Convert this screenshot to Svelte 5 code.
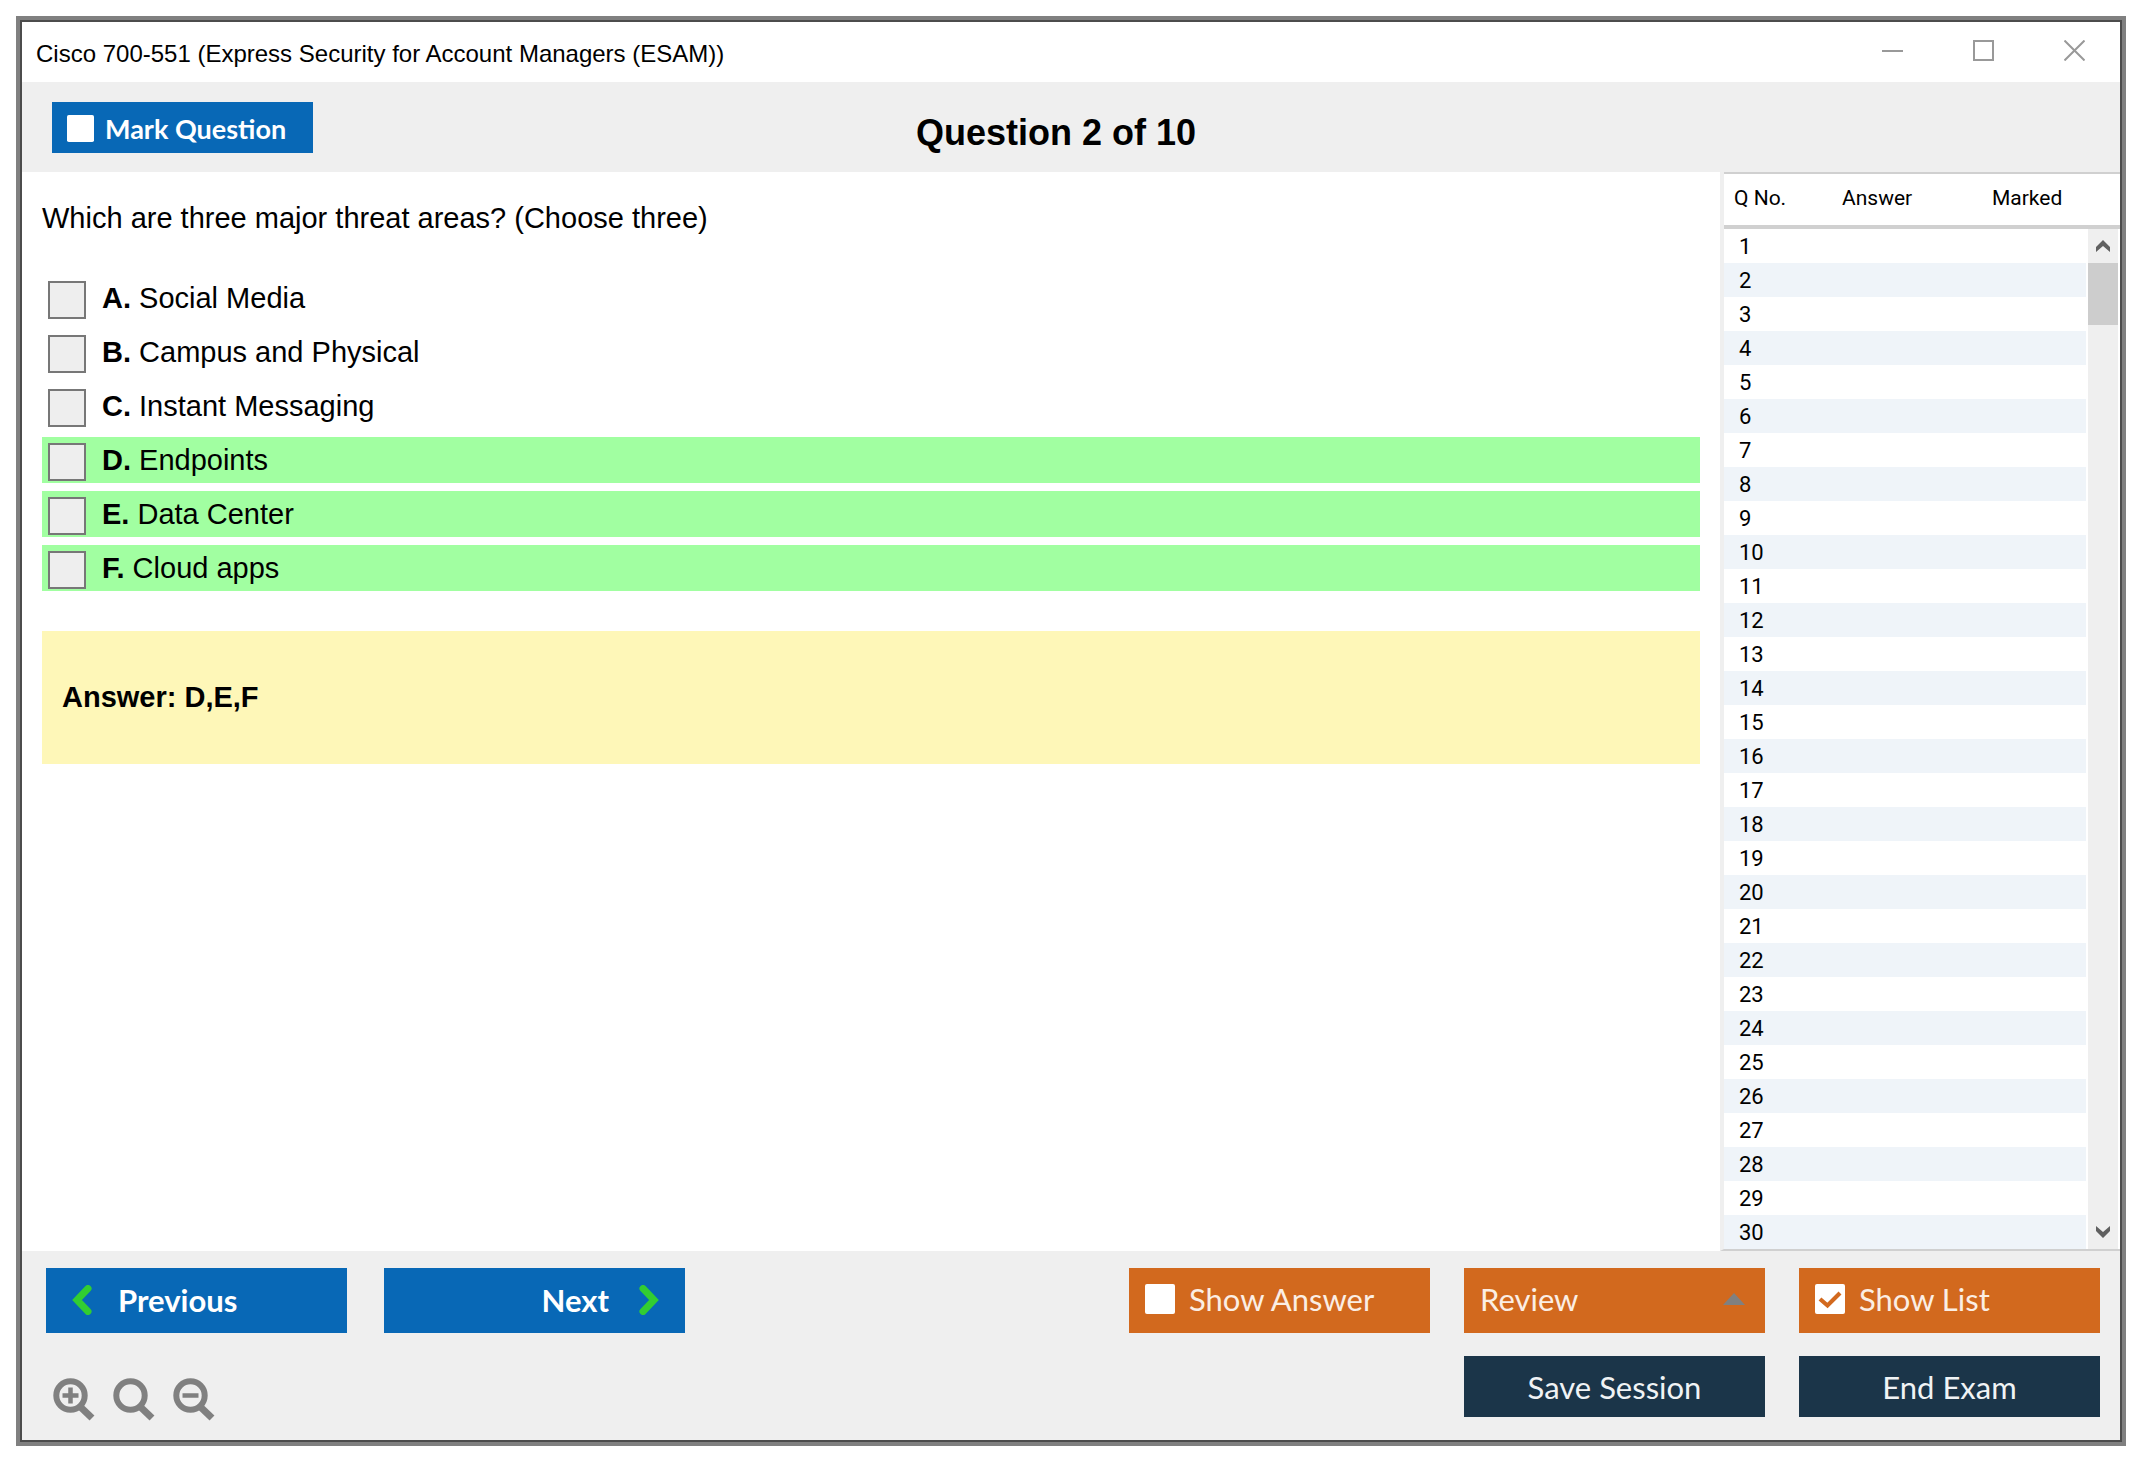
<script lang="ts">
  type Option = { letter: string; text: string; correct: boolean; checked: boolean };

  const title = "Cisco 700-551 (Express Security for Account Managers (ESAM))";
  const visibleRows = 30;

  let options: Option[] = $state([
    { letter: "A", text: "Social Media", correct: false, checked: false },
    { letter: "B", text: "Campus and Physical", correct: false, checked: false },
    { letter: "C", text: "Instant Messaging", correct: false, checked: false },
    { letter: "D", text: "Endpoints", correct: true, checked: false },
    { letter: "E", text: "Data Center", correct: true, checked: false },
    { letter: "F", text: "Cloud apps", correct: true, checked: false }
  ]);

  let marked = $state(false);
  let showAnswer = $state(false);
  let showList = $state(true);
  let review = $state("review");

  const rows = Array.from({ length: visibleRows }, (_, i) => i + 1);
  const answer = $derived(options.filter((o) => o.correct).map((o) => o.letter).join(","));
</script>

{#snippet tick(on: boolean)}
  <svg class="tick" viewBox="0 0 30 30" aria-hidden="true">
    <rect width="30" height="30" rx="2" fill="#fff" />
    {#if on}
      <path d="M5 15l7.500 6.500L25 9" fill="none" stroke="#d2691e" stroke-width="4.200" />
    {/if}
  </svg>
{/snippet}

{#snippet lens(sign: string)}
  <svg width="42" height="44" viewBox="0 0 42 44" fill="none" stroke="#808080" aria-hidden="true">
    <circle cx="17.500" cy="17.500" r="14.200" stroke-width="6" />
    <path d="M28 29.500L39 40" stroke-width="7" />
    {#if sign}
      <path d={sign} stroke-width="4.500" />
    {/if}
  </svg>
{/snippet}

<div class="window">
  <div class="titlebar">
    <span class="title">{title}</span>
    <div class="controls">
      <button type="button" aria-label="Minimize">
        <svg width="21" height="21" viewBox="0 0 21 21"><path d="M0 11h21" /></svg>
      </button>
      <button type="button" aria-label="Maximize">
        <svg width="21" height="21" viewBox="0 0 21 21"><path d="M1 1h19v19H1z" /></svg>
      </button>
      <button type="button" aria-label="Close">
        <svg width="21" height="21" viewBox="0 0 21 21"><path d="M.5 .5l20 20M20.500 .5l-20 20" /></svg>
      </button>
    </div>
  </div>

  <header>
    <label class="toggle mark">
      <input type="checkbox" bind:checked={marked} />
      {@render tick(marked)}
      Mark Question
    </label>
    <h1>Question 2 of 10</h1>
  </header>

  <div class="body">
    <main>
      <p class="question">Which are three major threat areas? (Choose three)</p>

      <div class="options">
        {#each options as option}
          <label class="option" class:correct={option.correct}>
            <input type="checkbox" bind:checked={option.checked} />
            <span><b>{option.letter}.</b> {option.text}</span>
          </label>
        {/each}
      </div>

      <div class="answer">Answer: {answer}</div>
    </main>

    {#if showList}
      <aside>
        <table>
          <thead>
            <tr>
              <th class="no">Q No.</th>
              <th class="given">Answer</th>
              <th>Marked</th>
            </tr>
          </thead>
          <tbody>
            {#each rows as row}
              <tr>
                <td>{row}</td>
                <td></td>
                <td></td>
              </tr>
            {/each}
          </tbody>
        </table>

        <div class="scrollbar">
          <button type="button" aria-label="Scroll up">
            <svg width="14" height="12" viewBox="0 0 14 12"><path d="M0 7L7 0l7 7v5L7 6l-7 6z" /></svg>
          </button>
          <div class="thumb"></div>
          <button type="button" class="down" aria-label="Scroll down">
            <svg width="14" height="12" viewBox="0 0 14 12"><path d="M0 5l7 7 7-7V0L7 6 0 0z" /></svg>
          </button>
        </div>
      </aside>
    {/if}
  </div>

  <footer>
    <div class="left">
      <div class="nav">
        <button type="button" class="btn blue">
          <svg width="20" height="30" viewBox="0 0 20 30"><path d="M16 3.500L5 15l11 11.500" /></svg>
          Previous
        </button>
        <button type="button" class="btn blue next">
          Next
          <svg width="20" height="30" viewBox="0 0 20 30"><path d="M4 3.500L15 15 4 26.500" /></svg>
        </button>
      </div>
      <div class="zoom">
        <button type="button" aria-label="Zoom in">{@render lens("M9.500 17.500h16M17.500 9.500v16")}</button>
        <button type="button" aria-label="Reset zoom">{@render lens("")}</button>
        <button type="button" aria-label="Zoom out">{@render lens("M9.500 17.500h16")}</button>
      </div>
    </div>

    <div class="actions">
      <label class="toggle btn orange">
        <input type="checkbox" bind:checked={showAnswer} />
        {@render tick(showAnswer)}
        Show Answer
      </label>
      <div class="review">
        <select class="btn orange" aria-label="Review" bind:value={review}>
          <option value="review">Review</option>
        </select>
        <svg width="22" height="12" viewBox="0 0 22 12" aria-hidden="true"><path d="M11 0l11 12H0z" /></svg>
      </div>
      <label class="toggle btn orange">
        <input type="checkbox" bind:checked={showList} />
        {@render tick(showList)}
        Show List
      </label>
      <button type="button" class="btn navy save">Save Session</button>
      <button type="button" class="btn navy">End Exam</button>
    </div>
  </footer>
</div>

<style>
:global(body) {
  padding: 16px 24px 24px 16px;
  background: #fff;
  color: #000;
  font-family: "Liberation Sans", Arial, sans-serif;
}

.window,
.window * {
  box-sizing: border-box;
}

.window {
  border: 4px solid #808080;
  outline: 2px solid #4c4c4c;
  outline-offset: -6px;
  padding: 2px;
  background: #fff;
}

button,
select {
  border: 0;
  padding: 0;
  background: none;
  font: inherit;
  color: inherit;
  cursor: pointer;
}

svg {
  flex: none;
}

.titlebar {
  display: flex;
  align-items: center;
  justify-content: space-between;
  height: 60px;
  padding-left: 14px;
}

.title {
  padding-top: 4px;
  font-size: 24px;
  line-height: 28px;
}

.controls {
  display: flex;
  align-self: stretch;
}

.controls button {
  display: flex;
  align-items: center;
  justify-content: center;
  width: 91px;
  height: 56px;
}

.controls svg {
  fill: none;
  stroke: #999;
  stroke-width: 2;
}

header {
  display: grid;
  grid-template-columns: 1fr auto 1fr;
  align-items: center;
  height: 90px;
  padding: 0 60px 0 30px;
  background: #efefef;
}

h1 {
  margin: 0;
  padding-top: 12px;
  font-size: 36px;
  line-height: 40px;
}

.toggle {
  position: relative;
  display: flex;
  align-items: center;
  cursor: pointer;
}

.toggle input {
  position: absolute;
  inset: 0;
  width: 100%;
  height: 100%;
  margin: 0;
  opacity: 0;
}

.tick {
  width: 30px;
  height: 30px;
}

.mark {
  justify-self: start;
  gap: 11px;
  width: 261px;
  height: 51px;
  padding: 2px 0 0 15px;
  background: #0868b6;
  color: #fff;
  font-family: Lato, sans-serif;
  font-size: 27px;
  font-weight: 700;
}

.mark .tick {
  width: 27px;
  height: 27px;
}

.body {
  display: flex;
}

main {
  flex: 1;
  padding: 28px 20px 0;
  font-size: 29px;
}

.question {
  margin: 0;
  line-height: 36px;
}

.options {
  display: grid;
  gap: 8px;
  margin-top: 39px;
}

.option {
  display: flex;
  align-items: center;
  gap: 16px;
  height: 46px;
  padding-left: 6px;
  line-height: 46px;
}

.option input {
  appearance: none;
  width: 38px;
  height: 38px;
  margin: 4px 0 0;
  border: 2px solid #777;
  background: #eee;
}

.option input:checked {
  background: #777;
  box-shadow: inset 0 0 0 6px #eee;
}

.correct {
  background: #a1ffa1;
}

.answer {
  margin-top: 40px;
  padding: 48px 20px;
  background: #fef7b8;
  font-weight: 700;
  line-height: 37px;
}

aside {
  display: grid;
  width: 400px;
  border-left: 4px solid #efefef;
  border-bottom: 2px solid #d0d0d0;
  font-family: Roboto, sans-serif;
  font-size: 22px;
}

table {
  grid-area: 1 / 1;
  width: 100%;
  border-collapse: collapse;
  table-layout: fixed;
}

th {
  height: 54px;
  padding: 0 0 4px 10px;
  border-top: 2px solid #d0d0d0;
  border-bottom: 4px solid #d0d0d0;
  font-size: 21px;
  font-weight: 400;
  text-align: left;
}

.no {
  width: 108px;
}

.given {
  width: 150px;
}

td {
  height: 34px;
  padding: 2px 0 0 15px;
  line-height: 32px;
}

tbody tr:nth-child(even) {
  background: #eff4f9;
}

.scrollbar {
  grid-area: 1 / 1;
  justify-self: end;
  display: flex;
  flex-direction: column;
  width: 34px;
  margin-top: 57px;
  border: solid #fff;
  border-width: 0 2px;
  background: #efefef;
}

.scrollbar button {
  display: flex;
  align-items: center;
  justify-content: center;
  height: 34px;
}

.scrollbar svg {
  fill: #606060;
}

.thumb {
  height: 62px;
  background: #cdcdcd;
}

.scrollbar .down {
  margin-top: auto;
}

footer {
  display: flex;
  align-items: flex-start;
  justify-content: space-between;
  padding: 17px 20px 18px 24px;
  background: #efefef;
  font-family: Lato, sans-serif;
}

.btn {
  display: flex;
  align-items: center;
  width: 301px;
  height: 65px;
  color: #fff;
  font-size: 31px;
}

.blue {
  gap: 26px;
  padding: 0 26px 2px;
  background: #0868b6;
  font-weight: 700;
}

.blue svg {
  fill: none;
  stroke: #32cd32;
  stroke-width: 7;
  stroke-linecap: round;
}

.next {
  justify-content: flex-end;
  gap: 30px;
}

.orange {
  gap: 14px;
  padding: 0 16px 4px;
  background: #d2691e;
  color: #fbeee4;
}

.navy {
  justify-content: center;
  height: 61px;
  background: #1b3549;
  color: #f0f3f5;
}

.nav {
  display: flex;
  gap: 37px;
}

.zoom {
  display: flex;
  gap: 18px;
  margin-top: 45px;
  padding-left: 7px;
}

.zoom svg {
  display: block;
}

.actions {
  display: grid;
  grid-template-columns: repeat(3, 301px);
  gap: 23px 34px;
}

.review {
  position: relative;
}

.review select {
  appearance: none;
}

.review svg {
  position: absolute;
  right: 20px;
  top: 25px;
  fill: #808080;
  pointer-events: none;
}

.save {
  grid-column: 2;
}
</style>
